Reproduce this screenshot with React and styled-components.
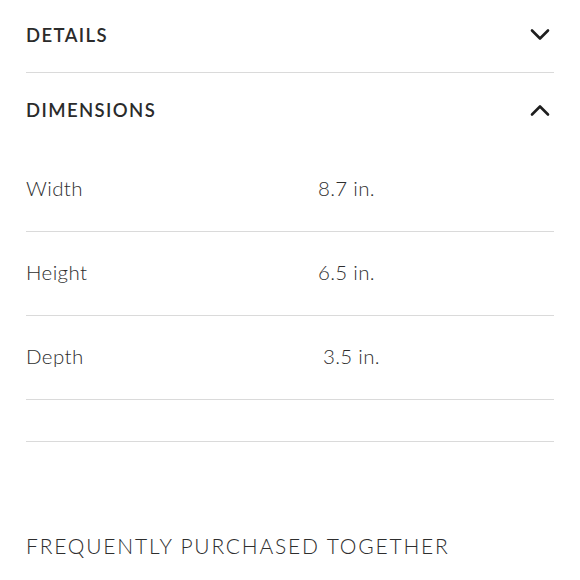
import React from 'react';
import styled, { createGlobalStyle } from 'styled-components';

const GlobalStyle = createGlobalStyle`
    body {
        margin: 0;
        background: #ffffff;
        font-family: 'Lato', 'Noto Sans', sans-serif;
        color: #333333;
    }
`

const dimensions = [
    { label: 'Width', value: '8.7 in.' },
    { label: 'Height', value: '6.5 in.' },
    { label: 'Depth', value: '3.5 in.', shift: 5 },
]

function Chevron({ up }) {
    return (
        <ChevronIcon width="22" height="14" viewBox="0 0 22 14">
            <polyline
                points={up ? '3,11.5 11,3.5 19,11.5' : '3,2.5 11,10.5 19,2.5'}
                fill="none"
                stroke="#1e1e1e"
                strokeWidth="2.6"
                strokeLinecap="round"
                strokeLinejoin="round"
            />
        </ChevronIcon>
    )
}

export default function App() {
    return (
        <Page>
            <GlobalStyle />
            <Section>
                <SectionHeader height={72}>
                    <SectionTitle>DETAILS</SectionTitle>
                    <Chevron />
                </SectionHeader>
            </Section>
            <Section>
                <SectionHeader height={75} offset={1}>
                    <SectionTitle>DIMENSIONS</SectionTitle>
                    <Chevron up />
                </SectionHeader>
                {dimensions.map(d => (
                    <SpecRow key={d.label}>
                        <SpecLabel>{d.label}</SpecLabel>
                        <SpecValue shift={d.shift}>{d.value}</SpecValue>
                    </SpecRow>
                ))}
                <EmptyRow />
            </Section>
            <Together>FREQUENTLY PURCHASED TOGETHER</Together>
        </Page>
    )
}

const Page = styled.div`
    width: 580px;
    height: 580px;
    padding: 0 26px 0 26px;
    box-sizing: border-box;
    overflow: hidden;
`

const Section = styled.section`
    border-bottom: 1.5px solid #dadada;
`

const SectionHeader = styled.div`
    display: flex;
    align-items: center;
    justify-content: space-between;
    height: ${props => props.height}px;
    padding-bottom: ${props => props.offset || 2}px;
    box-sizing: border-box;
`

const SectionTitle = styled.h2`
    margin: 0;
    font-size: 18.5px;
    font-weight: 600;
    letter-spacing: 1.4px;
    color: #2b2b2b;
`

const ChevronIcon = styled.svg`
    display: block;
    margin-right: 3px;
`

const SpecRow = styled.div`
    display: grid;
    grid-template-columns: 292px 1fr;
    align-items: center;
    height: 84px;
    border-bottom: 1.5px solid #dadada;
    box-sizing: border-box;
    padding-bottom: 4px;
    font-size: 20.5px;
    font-weight: 300;
    color: #2e2e2e;
`

const SpecLabel = styled.span`
    letter-spacing: 0.4px;
`

const SpecValue = styled.span`
    padding-left: ${props => props.shift || 0}px;
    letter-spacing: 0.3px;
`

const EmptyRow = styled.div`
    height: 41px;
`

const Together = styled.h3`
    margin: 91px 0 0 0;
    font-size: 21px;
    font-weight: 300;
    letter-spacing: 1.8px;
    color: #2e2e2e;
`
